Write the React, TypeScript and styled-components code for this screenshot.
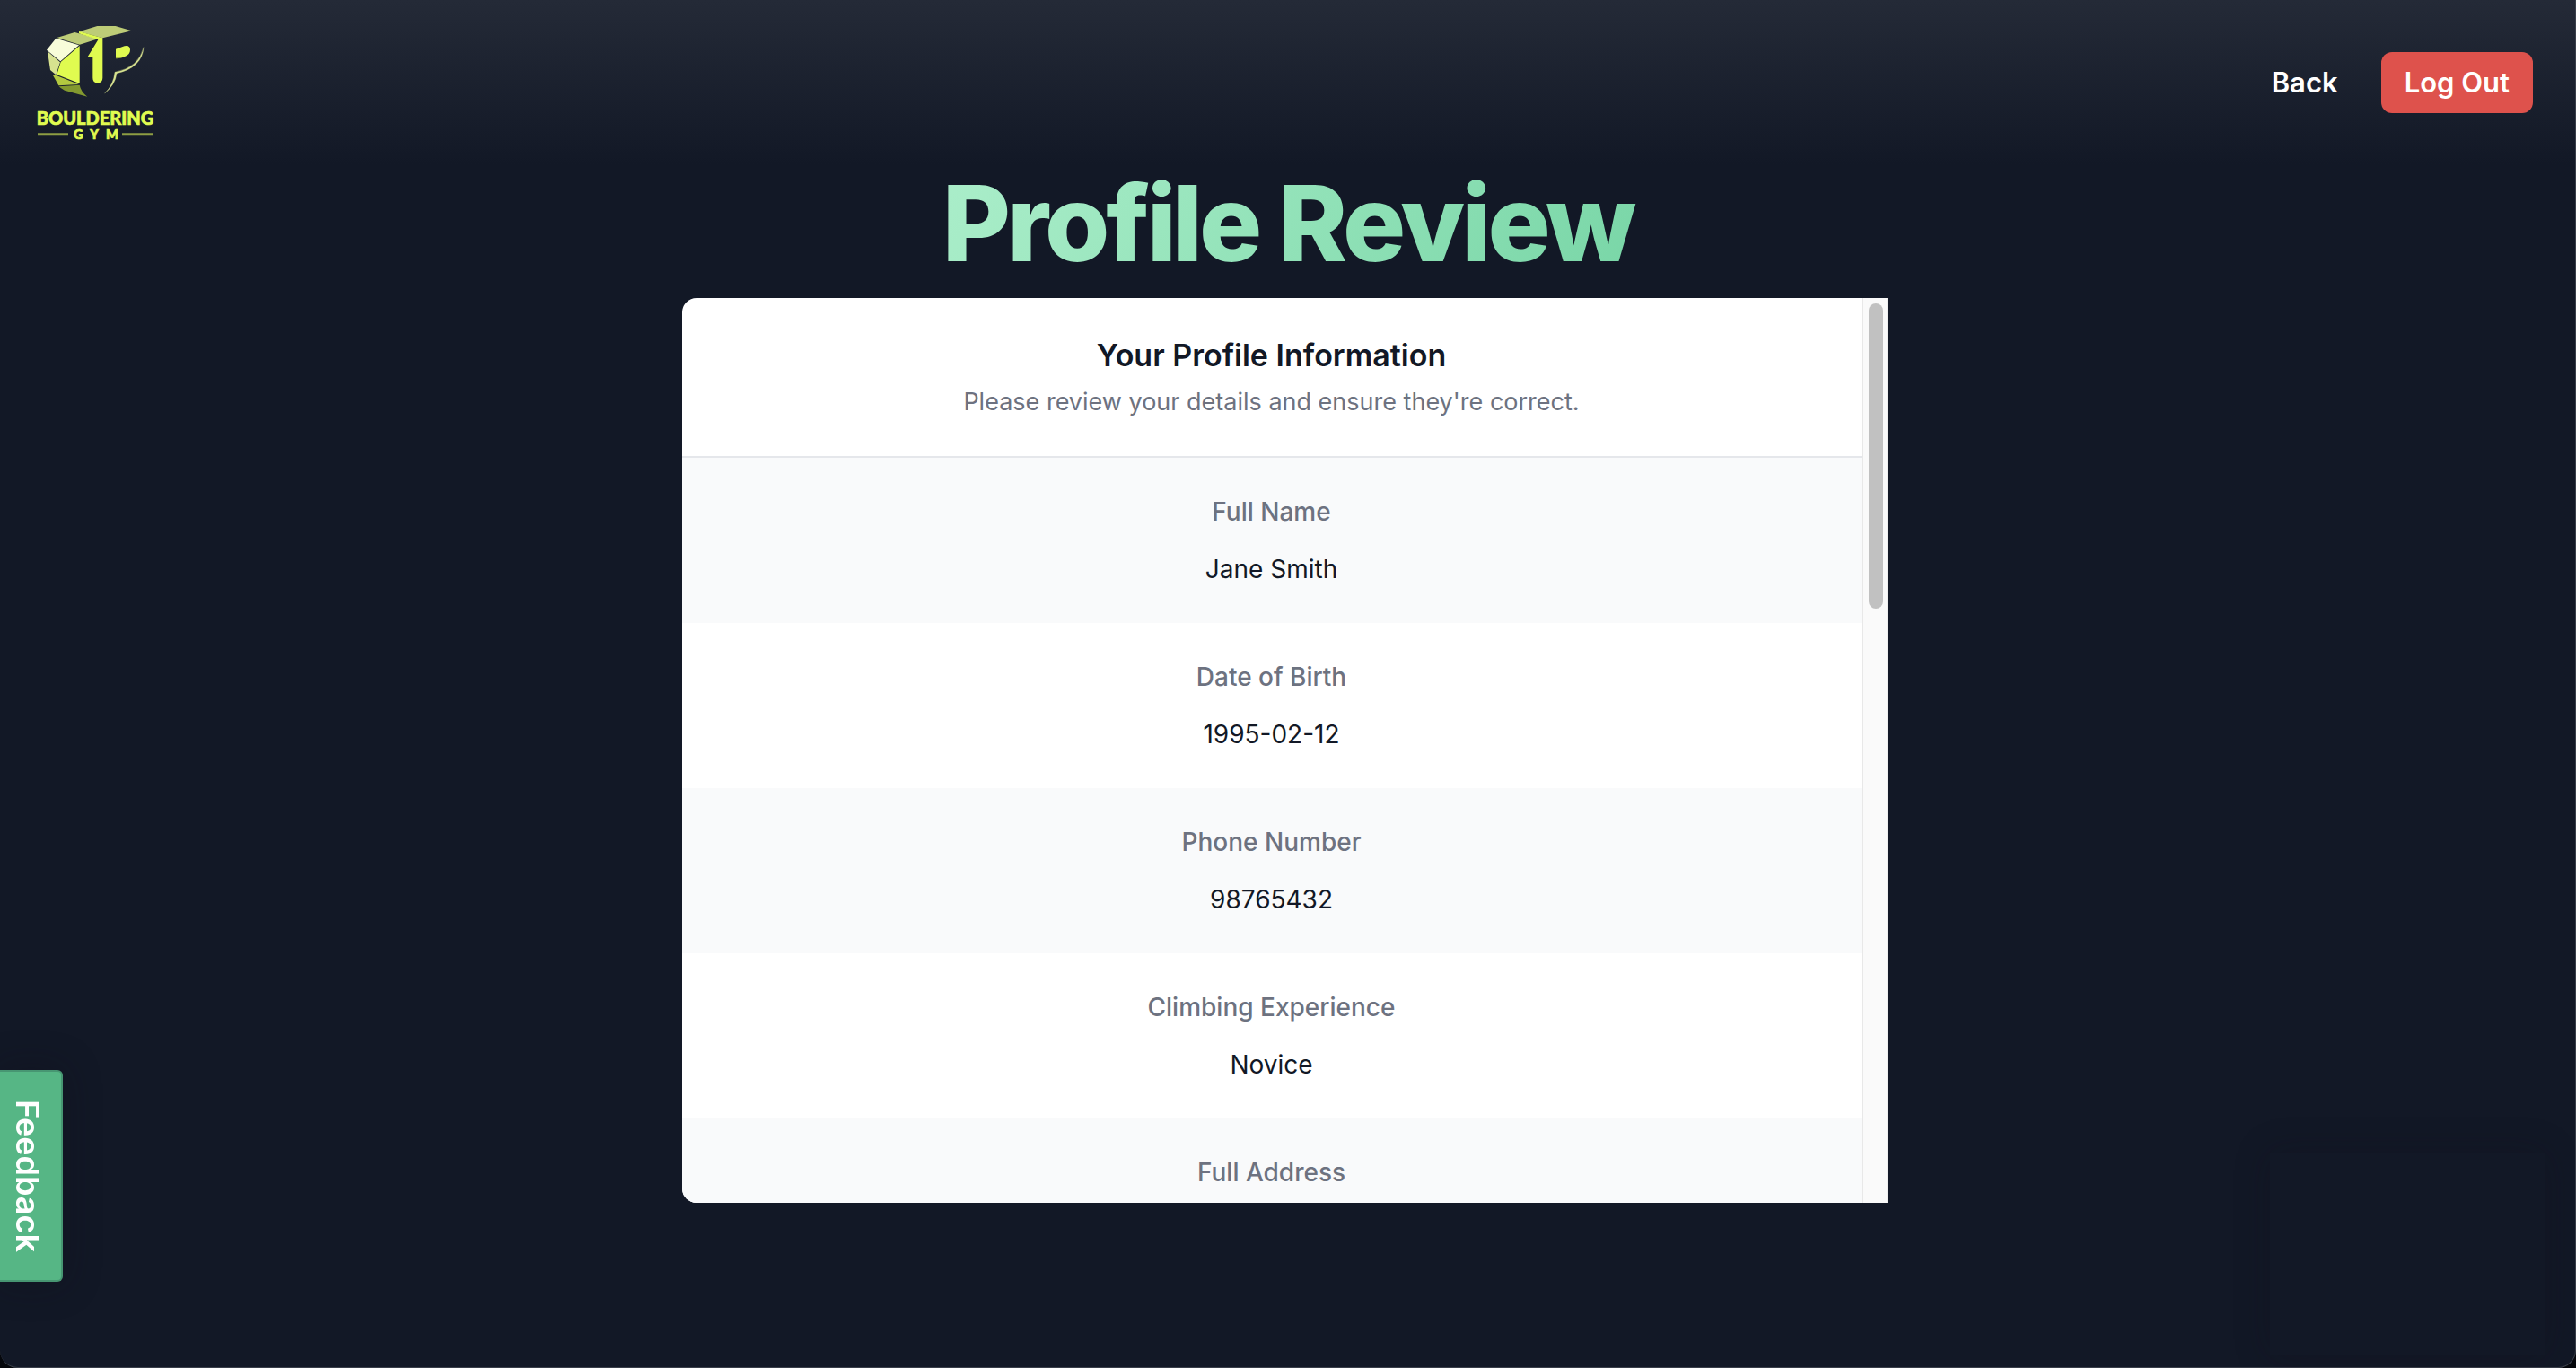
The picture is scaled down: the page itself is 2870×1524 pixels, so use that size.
import React from "react";
import styled, { createGlobalStyle } from "styled-components";

const sans = `Inter, "Liberation Sans", sans-serif`;

const GlobalStyle = createGlobalStyle`
  *, *::before, *::after { box-sizing: border-box; }
  body { margin: 0; background: #05070c; font-family: ${sans}; }
  h1, h2, p, dl, dt, dd { margin: 0; }
`;

const Shell = styled.div`
  min-height: 100vh;
  background: #121826;
  border-right: 1px solid #3b404b;
  border-bottom: 1px solid #3b404b;
  border-radius: 0 0 20px 20px;
  overflow: hidden;
`;

const TopBar = styled.header`
  display: flex;
  align-items: center;
  justify-content: space-between;
  padding: 28px 47px 28px 42px;
  background: linear-gradient(to bottom, #242a37, #121826);
`;

const LogoLink = styled.a`
  display: block;
  width: 128px;
  height: 128px;

  svg { display: block; overflow: visible; }
`;

const Nav = styled.nav`
  display: flex;
  align-items: center;
  gap: 48px;
`;

const BackLink = styled.a`
  color: #ffffff;
  font-size: 31px;
  line-height: 44px;
  font-weight: 600;
  text-decoration: none;
`;

const LogOutButton = styled.button`
  padding: 12px 26px;
  border: 0;
  border-radius: 12px;
  background: #de524c;
  color: #ffffff;
  font-family: inherit;
  font-size: 31px;
  line-height: 44px;
  font-weight: 600;
`;

const Main = styled.main`
  display: flex;
  flex-direction: column;
  align-items: center;
  padding-top: 4px;
`;

const Title = styled.h1`
  margin-bottom: 22px;
  padding: 0 8px;
  font-size: 117px;
  line-height: 122px;
  font-weight: 800;
  letter-spacing: -4px;
  color: transparent;
  background: linear-gradient(120deg, #abeeca, #79d6a7);
  background-clip: text;
  -webkit-background-clip: text;
`;

const CardArea = styled.section`
  display: flex;
  justify-content: center;
  width: 100%;
  padding-right: 6px;
`;

const Card = styled.div`
  display: flex;
  width: 100%;
  max-width: 1344px;
  height: 1008px;
  overflow: hidden;
  border-radius: 16px 0 0 16px;
  background: #ffffff;
`;

const ScrollArea = styled.div`
  flex: 1;
  overflow-y: auto;
  scrollbar-width: none;
  text-align: center;
`;

const ScrollTrack = styled.div`
  width: 30px;
  padding: 6px 4px 6px 6px;
  border-left: 2px solid #e8e8e8;
  border-right: 2px solid #efefef;
  background: #fafafa;
`;

const ScrollThumb = styled.div`
  width: 16px;
  height: 340px;
  border-radius: 8px;
  background: #c1c1c1;
`;

const CardHeader = styled.div`
  padding: 40px;
  border-bottom: 2px solid #e5e7eb;
`;

const CardTitle = styled.h2`
  font-size: 34px;
  line-height: 48px;
  font-weight: 600;
  color: #121826;
`;

const CardText = styled.p`
  margin-top: 8px;
  font-size: 27px;
  line-height: 40px;
  color: #6d7280;
`;

const Row = styled.div`
  display: flex;
  flex-direction: column;
  gap: 24px;
  padding: 40px;
  font-size: 28px;
  line-height: 40px;

  &:nth-child(odd) { background: #f9fafb; }
`;

const Label = styled.dt`
  font-weight: 500;
  color: #6d7280;
`;

const Value = styled.dd`
  color: #121826;
`;

const FeedbackButton = styled.button`
  position: fixed;
  left: 0;
  top: 1192px;
  width: 70px;
  height: 236px;
  padding: 0 6px 0 0;
  border: 2px solid #479672;
  border-left: 0;
  border-radius: 0 6px 6px 0;
  background: #56b685;
  box-shadow: 0 0 40px rgba(18, 14, 28, 0.4);
  color: #ffffff;
  font-family: inherit;
  font-size: 36px;
  font-weight: 600;
  line-height: 40px;
  writing-mode: vertical-rl;
`;

const WidgetFrame = styled.div`
  position: fixed;
  right: 35px;
  bottom: 14px;
  width: 306px;
  height: 225px;
  background: #121826;
  box-shadow: 0 0 36px rgba(20, 16, 28, 0.25);
`;

const fields = [
  { label: "Full Name", value: "Jane Smith" },
  { label: "Date of Birth", value: "1995-02-12" },
  { label: "Phone Number", value: "98765432" },
  { label: "Climbing Experience", value: "Novice" },
  { label: "Full Address", value: "" },
];

function Logo() {
  return (
    <svg viewBox="126 84 384 384" width="128" height="128" role="img" aria-label="Bouldering Gym">
      <path d="M187 128 L264 151 L202 205 L156 167 Z" fill="#f8fdd9" />
      <path d="M159 172 L201 208 L187 250 L168 234 Z" fill="#d7e28f" />
      <path d="M266 153 V279 L190 249 L203 207 Z" fill="#e0fb50" />
      <path d="M176 250 L190 253 L264 282 L196 286 Z" fill="#b3c940" />
      <path d="M197 289 L266 284 Q270 306 292 323 L216 302 Q203 296 197 289 Z" fill="#83992f" />
      <path d="M190 126 L250 108 L328 130 L266 149 Z" fill="#bdcc77" />
      <path d="M264 106 L325 87 H386 L440 103 L343 127 Z" fill="#bdcc77" />
      <path d="M264 105 L343 127 V260 Q343 277 326 277 Q310 277 310 260 V190 H293 L328 133 L264 112 Z" fill="#e0fb50" />
      <path d="M387 164 L416 154 Q435 150 435 167 Q435 182 417 189 H387 Z" fill="#e0fb50" />
      <path d="M387 189 H417 Q404 197 387 196 Z" fill="#a5b83e" />
      <path
        d="M480 158 Q475 226 390 245 Q386 282 350 312 Q380 282 384 241 Q464 226 480 158 Z"
        fill="#d7e28f"
        stroke="#d7e28f"
        strokeWidth="1"
      />
      <g fontFamily="Lato, sans-serif" fontWeight="900" fill="#e0fb50" stroke="#e0fb50" strokeWidth="2" textAnchor="middle">
        <text x="318" y="416" fontSize="60">BOULDERING</text>
        <g fontSize="44">
          <text x="262" y="464">G</text>
          <text x="315" y="464">Y</text>
          <text x="375" y="464">M</text>
        </g>
      </g>
      <path d="M126 448 H228 M408 448 H510" stroke="#8d9d43" strokeWidth="6" />
    </svg>
  );
}

export default function App() {
  return (
    <Shell>
      <GlobalStyle />
      <TopBar>
        <LogoLink href="#home">
          <Logo />
        </LogoLink>
        <Nav>
          <BackLink href="#back">Back</BackLink>
          <LogOutButton type="button">Log Out</LogOutButton>
        </Nav>
      </TopBar>
      <Main>
        <Title>Profile Review</Title>
        <CardArea>
          <Card>
            <ScrollArea>
              <CardHeader>
                <CardTitle>Your Profile Information</CardTitle>
                <CardText>Please review your details and ensure they're correct.</CardText>
              </CardHeader>
              <dl>
                {fields.map((field) => (
                  <Row key={field.label}>
                    <Label>{field.label}</Label>
                    <Value>{field.value}</Value>
                  </Row>
                ))}
              </dl>
            </ScrollArea>
            <ScrollTrack aria-hidden="true">
              <ScrollThumb />
            </ScrollTrack>
          </Card>
        </CardArea>
      </Main>
      <FeedbackButton type="button">Feedback</FeedbackButton>
      <WidgetFrame />
    </Shell>
  );
}
